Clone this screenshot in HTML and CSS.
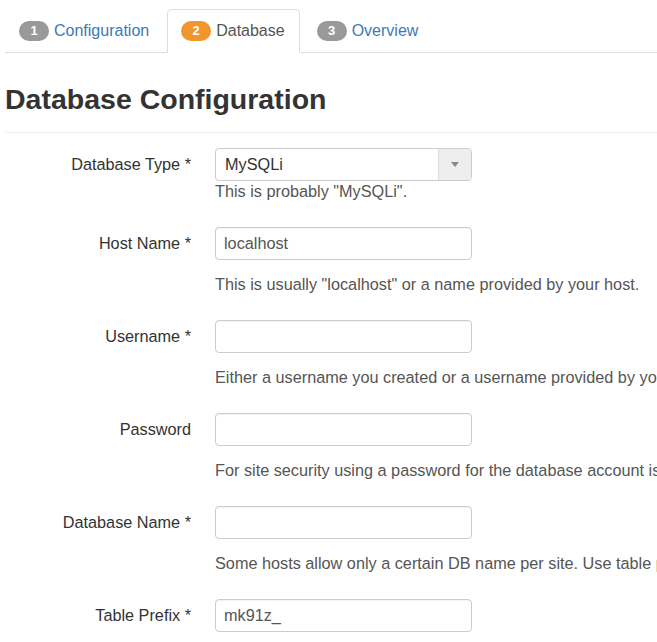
FILE: index.html
```html
<!DOCTYPE html>
<html lang="en">
<head>
<meta charset="utf-8">
<title>Database Configuration</title>
<link rel="stylesheet" href="styles.css">
</head>
<body>
<div class="page">
  <ul class="tabs">
    <li class="tab"><a class="tab-link" href="#"><span class="badge">1</span>Configuration</a></li>
    <li class="tab active"><a class="tab-link" href="#"><span class="badge badge-warning">2</span>Database</a></li>
    <li class="tab"><a class="tab-link" href="#"><span class="badge">3</span>Overview</a></li>
  </ul>

  <h2 class="title">Database Configuration</h2>
  <hr class="rule">

  <form class="form">
    <div class="row row-select">
      <label class="label">Database Type *</label>
      <div class="controls">
        <div class="select">
          <span class="select-value">MySQLi</span>
          <span class="select-arrow"><span class="caret"></span></span>
        </div>
        <p class="help help-tight">This is probably "MySQLi".</p>
      </div>
    </div>

    <div class="row">
      <label class="label">Host Name *</label>
      <div class="controls">
        <input class="input" type="text" value="localhost">
        <p class="help">This is usually "localhost" or a name provided by your host.</p>
      </div>
    </div>

    <div class="row">
      <label class="label">Username *</label>
      <div class="controls">
        <input class="input" type="text" value="">
        <p class="help">Either a username you created or a username provided by your host.</p>
      </div>
    </div>

    <div class="row">
      <label class="label">Password</label>
      <div class="controls">
        <input class="input" type="password" value="">
        <p class="help">For site security using a password for the database account is mandatory.</p>
      </div>
    </div>

    <div class="row">
      <label class="label">Database Name *</label>
      <div class="controls">
        <input class="input" type="text" value="">
        <p class="help">Some hosts allow only a certain DB name per site. Use table prefix in this case for distinct Joomla! sites.</p>
      </div>
    </div>

    <div class="row">
      <label class="label">Table Prefix *</label>
      <div class="controls">
        <input class="input" type="text" value="mk91z_">
        <p class="help">Choose a table prefix or use the randomly generated.</p>
      </div>
    </div>
  </form>
</div>
</body>
</html>
```

FILE: styles.css
```css
html, body {
  margin: 0;
  padding: 0;
  background: #fff;
}

body {
  font-family: "Liberation Sans", Arial, sans-serif;
  font-size: 16.25px;
  color: #333;
  overflow: hidden;
}

.page {
  padding: 9px 0 0 5px;
  width: 652px;
  height: 633px;
  overflow: hidden;
}

.tabs {
  list-style: none;
  margin: 0;
  padding: 0;
  display: flex;
  border-bottom: 1px solid #ddd;
  width: 652px;
}

.tab {
  margin-right: 3px;
  margin-bottom: -1px;
}

.tab-link {
  display: flex;
  align-items: center;
  height: 42px;
  padding: 0 14px 1px 13px;
  box-sizing: border-box;
  height: 44px;
  border: 1px solid transparent;
  border-radius: 5px 5px 0 0;
  color: #3d79b5;
  text-decoration: none;
  font-size: 16px;
}

.tab.active .tab-link {
  border-color: #ddd;
  border-bottom-color: #fff;
  background: #fff;
  color: #555;
}

.badge {
  display: inline-flex;
  align-items: center;
  justify-content: center;
  width: 30px;
  height: 20px;
  border-radius: 10px;
  background: #999;
  color: #fff;
  font-weight: bold;
  font-size: 13px;
  margin-right: 5px;
}

.badge-warning {
  background: #f0962b;
}

.title {
  margin: 29px 0 0 0;
  font-size: 28.5px;
  line-height: 34px;
  font-weight: bold;
  color: #333;
}

.rule {
  margin: 16px 0 0 0;
  border: 0;
  border-top: 1px solid #eee;
  width: 652px;
}

.form {
  margin-top: 15px;
}

.row {
  display: grid;
  grid-template-columns: 186px 1fr;
  column-gap: 24px;
  margin-bottom: 26px;
}

.label {
  text-align: right;
  height: 33px;
  line-height: 33px;
  color: #333;
}

.controls {
  display: flex;
  flex-direction: column;
  align-items: flex-start;
  min-width: 0;
}

.select {
  width: 257px;
  height: 33px;
  box-sizing: border-box;
  border: 1px solid #ccc;
  border-radius: 4px;
  display: flex;
  align-items: stretch;
  background: #fff;
}

.select-value {
  flex: 1;
  padding-left: 9px;
  line-height: 30px;
  color: #333;
}

.select-arrow {
  width: 32px;
  border-left: 1px solid #ddd;
  background: #eee;
  border-radius: 0 3px 3px 0;
  display: flex;
  align-items: center;
  justify-content: center;
}

.caret {
  width: 0;
  height: 0;
  border-left: 4px solid transparent;
  border-right: 4px solid transparent;
  border-top: 5px solid #888;
}

.input {
  width: 257px;
  height: 33px;
  box-sizing: border-box;
  border: 1px solid #ccc;
  border-radius: 4px;
  padding: 0 8px;
  font-family: "Liberation Sans", Arial, sans-serif;
  font-size: 16.25px;
  color: #555;
  box-shadow: inset 0 1px 1px rgba(0, 0, 0, 0.05);
  margin: 0;
}

.help {
  margin: 14px 0 0 0;
  line-height: 20px;
  color: #555;
  white-space: nowrap;
}

.help-tight {
  margin-top: 0;
}
```
